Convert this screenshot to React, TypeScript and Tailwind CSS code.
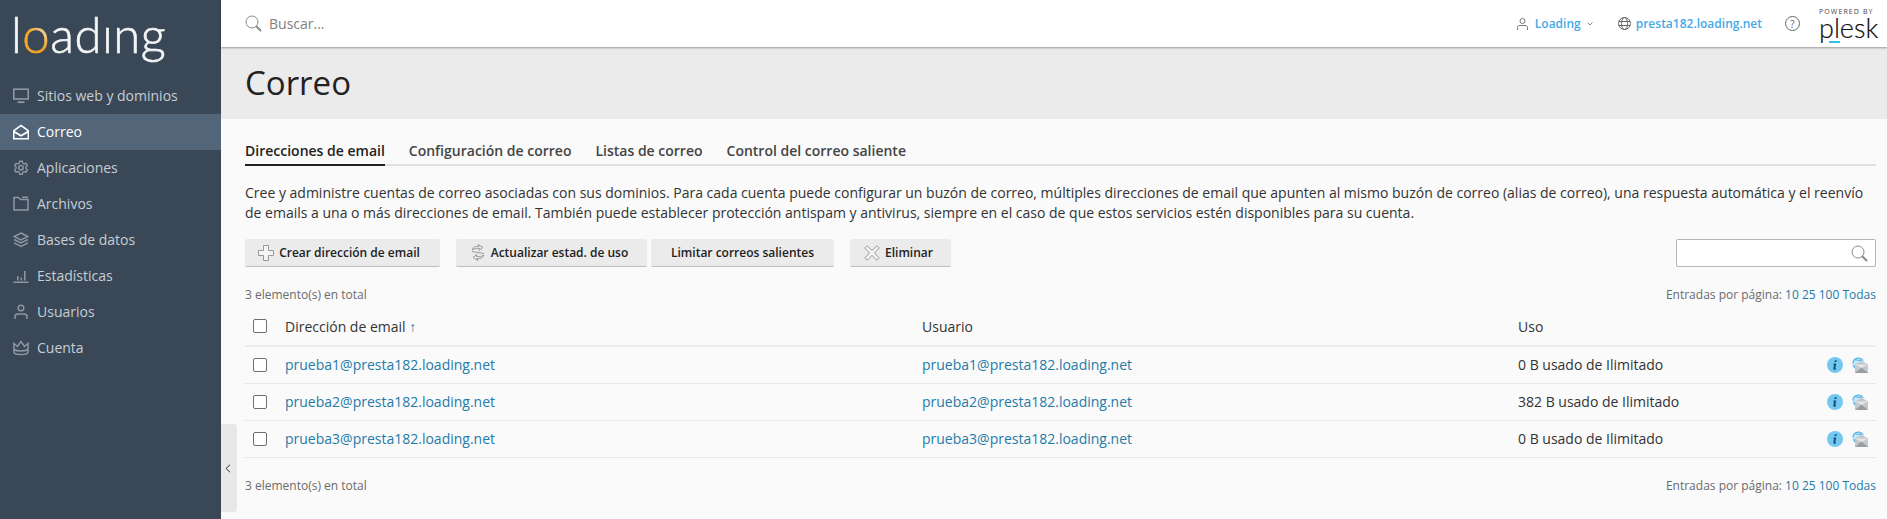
import React from "react";

const S = { fill: "none", stroke: "currentColor", strokeWidth: 1.5 } as const;

const navIcons: Record<string, React.ReactNode> = {
  monitor: (<svg width="16" height="16" viewBox="0 0 16 16" {...S}><rect x="0.8" y="1.2" width="14.4" height="9.8" strokeWidth="1.6" /><path d="M4.500 14.200h7" strokeWidth="1.800" /></svg>),
  mail: (<svg width="16" height="16" viewBox="0 0 16 16"><path d="M0 6.200 8 0.500l8 5.700V15.500H0Z" fill="#fff" /><path d="M1.700 7 8 2.500 14.300 7 8 10.800Z" fill="#536679" /><path d="M1.500 9 8 12.800 14.500 9v5H1.500Z" fill="#536679" /></svg>),
  gear: (<svg width="16" height="16" viewBox="0 0 16 16" {...S}><path d="M6.600.8h2.800l.4 2 1.300.7 1.900-.7 1.400 2.400-1.500 1.300v1.500l1.500 1.300-1.400 2.400-1.900-.7-1.300.7-.4 2H6.600l-.4-2-1.300-.7-1.900.7L1.600 9.300 3.100 8V6.500L1.600 5.200 3 2.800l1.900.7 1.300-.7Z" transform="translate(0 .5)" strokeWidth="1.400" /><circle cx="8" cy="7.800" r="2.200" /></svg>),
  folder: (<svg width="16" height="16" viewBox="0 0 16 16" {...S}><path d="M1 1.500v12.500h14V3.500H7.500L5.500 1.500Z" /><path d="M9 1.300h6" /></svg>),
  layers: (<svg width="16" height="16" viewBox="0 0 16 16" {...S}><path d="M8 1 15 4.500 8 8 1 4.500Z" /><path d="M1 7.500 8 11l7-3.500" /><path d="M1 10.800 8 14.300l7-3.500" /></svg>),
  chart: (<svg width="16" height="16" viewBox="0 0 16 16" fill="currentColor"><rect x="0.500" y="13.500" width="15" height="1.500" /><rect x="4" y="8" width="1.500" height="4.500" /><rect x="7.500" y="9.500" width="1.500" height="3" /><rect x="11" y="3" width="1.500" height="9.500" /></svg>),
  user: (<svg width="16" height="16" viewBox="0 0 16 16" {...S}><circle cx="8" cy="4" r="2.800" /><path d="M2 15v-2.500C2 10.500 3.500 10 5 10h6c1.500 0 3 .5 3 2.500V15" /></svg>),
  crown: (<svg width="16" height="16" viewBox="0 0 16 16" {...S}><path d="M1 3.500 4.500 6.500 8 1.500l3.500 5L15 3.500V12c0 1.500-2 2.500-7 2.500S1 13.500 1 12Z" /><path d="M1 9.500c2 1.300 4.500 1.500 7 1.500s5-.2 7-1.500" /></svg>),
};

const nav = [
  ["monitor", "Sitios web y dominios"],
  ["mail", "Correo"],
  ["gear", "Aplicaciones"],
  ["folder", "Archivos"],
  ["layers", "Bases de datos"],
  ["chart", "Estadísticas"],
  ["user", "Usuarios"],
  ["crown", "Cuenta"],
];

function SearchIcon({ size = 17 }: { size?: number }) {
  return (
    <svg width={size} height={size} viewBox="0 0 17 17" fill="none" stroke="#8a8a8a" strokeWidth="1">
      <circle cx="7" cy="7" r="6" />
      <path d="M11.500 11.500 15.500 15.500" strokeWidth="2" strokeLinecap="round" />
    </svg>
  );
}

function InfoIcon() {
  return (
    <svg width="16" height="16" viewBox="0 0 16 16">
      <circle cx="8" cy="8" r="8" fill="#74c8ef" />
      <path d="M7.800 3.200h2l-.4 1.800h-2ZM6.600 6.500h2.700l-1 4.700c-.1.400.2.500.9.300l-.2.900c-.5.200-1 .3-1.600.3-1 0-1.300-.5-1.100-1.400l.7-3.400h-.6Z" fill="#13507c" />
    </svg>
  );
}

function MailGlobeIcon() {
  return (
    <svg width="16" height="16" viewBox="0 0 16 16">
      <circle cx="6.500" cy="6.500" r="6" fill="#c5e9f8" />
      <path d="M1 6.500a5.500 5.500 0 0 1 10-3M3 2.500c2 1 4 1 6.500 1M1.500 8c1 3 3 4 4 4" fill="none" stroke="#5cb9e6" strokeWidth="1.300" />
      <path d="M3 7.500 9.500 3.800 16 7.500V16H3Z" fill="#c2c8cc" />
      <path d="M3 7.500 9.500 11 16 7.500" fill="#e3e6e8" />
      <path d="M3 16 9.500 10.500 16 16Z" fill="#989da1" />
    </svg>
  );
}

function Checkbox() {
  return <span className="block w-[14px] h-[14px] rounded-[2px] border border-[#6f6f6f] bg-white" />;
}

function ToolButton({ icon, label, className }: { icon?: React.ReactNode; label: string; className: string }) {
  return (
    <button className={`h-[28px] flex items-center justify-center gap-[5px] bg-[#ebebeb] rounded-[2px] border-b border-[#bdbdbd] text-[12px] font-semibold text-[#222] ${className}`}>
      {icon}
      {label}
    </button>
  );
}

const rows = [
  ["prueba1@presta182.loading.net", "0 B usado de Ilimitado"],
  ["prueba2@presta182.loading.net", "382 B usado de Ilimitado"],
  ["prueba3@presta182.loading.net", "0 B usado de Ilimitado"],
];

function PerPage() {
  return (
    <span className="text-[12px] text-[#6b6b6b]">
      Entradas por página: <span className="text-[#1f7ba8]">10 25 100 Todas</span>
    </span>
  );
}

export default function App() {
  return (
    <div className="relative flex h-[519px] w-full overflow-hidden bg-[#fafafa] font-['Open_Sans',sans-serif] text-[14px] text-[#222]">
      <aside className="w-[221px] shrink-0 bg-[#394756] text-[#c7ced5]">
        <div className="h-[78px] pl-[11px] pt-[4px] flex items-start">
          <span className="font-['Lato',sans-serif] font-light [-webkit-text-stroke:0.6px_currentColor] text-[49px] leading-[60px] tracking-[0.5px] text-[#f4f5f6] whitespace-nowrap">
            l<span className="bg-[linear-gradient(45deg,#f5a623_45%,#ffffff_80%)] bg-clip-text text-transparent">o</span>adıng
          </span>
        </div>
        <nav className="flex flex-col">
          {nav.map(([icon, label]) => {
            const active = label === "Correo";
            return (
              <div key={label} className={`h-[36px] flex items-center pl-[13px] gap-[8px] ${active ? "bg-[#536679] text-white" : ""}`}>
                <span className={active ? "text-white" : "text-[#8e98a3]"}>{navIcons[icon]}</span>
                <span className="mb-[2px]">{label}</span>
              </div>
            );
          })}
        </nav>
      </aside>

      <main className="flex-1 min-w-0 flex flex-col">
        <header className="relative h-[47px] shrink-0 bg-white flex items-center pl-[24px] pr-[10px] shadow-[0_1px_2px_rgba(0,0,0,0.35)]">
          <SearchIcon />
          <span className="ml-[7px] text-[#808080]">Buscar...</span>
          <div className="ml-auto flex items-center">
            <svg width="11" height="12" viewBox="0 0 11 12" fill="none" stroke="#777" strokeWidth="1">
              <circle cx="5.500" cy="3" r="2.500" />
              <path d="M.5 12V9.500C.5 8 1.500 7.500 3 7.500h5c1.500 0 2.500.5 2.500 2V12" />
            </svg>
            <span className="ml-[7px] text-[12px] font-semibold text-[#45a9e6]">Loading</span>
            <svg className="ml-[6px]" width="6" height="4" viewBox="0 0 6 4" fill="none" stroke="#888" strokeWidth="1"><path d="M.5.5 3 3 5.500.5" /></svg>
            <svg className="ml-[25px]" width="13" height="13" viewBox="0 0 13 13" fill="none" stroke="#666" strokeWidth="1">
              <circle cx="6.500" cy="6.500" r="6" />
              <ellipse cx="6.500" cy="6.500" rx="3" ry="6" />
              <path d="M1 4.500h11M1 8.500h11" />
            </svg>
            <span className="ml-[5px] text-[12px] font-semibold text-[#45a9e6]">presta182.loading.net</span>
            <span className="ml-[23px] w-[15px] h-[15px] rounded-full border border-[#666] flex items-center justify-center text-[10px] leading-none text-[#666]">?</span>
            <div className="ml-[19px] w-[58px] flex flex-col items-start">
              <span className="text-[7px] leading-[8px] tracking-[1.100px] text-[#444] whitespace-nowrap">POWERED BY</span>
              <span className="relative font-['Lato',sans-serif] font-light text-[27px] leading-[23px] text-[#111] [-webkit-text-stroke:0.2px_currentColor]">
                plesk
                <span className="absolute left-[10px] top-[25px] w-[11px] h-[2px] bg-[#28c3e6]" />
              </span>
            </div>
          </div>
        </header>

        <div className="h-[72px] shrink-0 bg-[#ebebeb] pl-[24px] flex items-center">
          <h1 className="text-[33px] font-normal text-[#222]">Correo</h1>
        </div>

        <div className="pl-[24px] pr-[11px]">
          <div className="mt-[20px] h-[27px] pt-[1px] flex gap-[24px] border-b-2 border-[#e0e0e0] font-semibold text-[#444]">
            <div className="h-[26px] border-b-2 border-[#222] text-[#222]">Direcciones de email</div>
            <div>Configuración de correo</div>
            <div>Listas de correo</div>
            <div>Control del correo saliente</div>
          </div>

          <p className="mt-[17px] text-[14px] leading-[20px] text-[#333]">
            Cree y administre cuentas de correo asociadas con sus dominios. Para cada cuenta puede configurar un buzón de correo, múltiples direcciones de email que apunten al mismo buzón de correo (alias de correo), una respuesta automática y el reenvío de emails a una o más direcciones de email. También puede establecer protección antispam y antivirus, siempre en el caso de que estos servicios estén disponibles para su cuenta.
          </p>

          <div className="mt-[16px] flex items-center">
            <ToolButton className="w-[195px] pr-[7px]" label="Crear dirección de email" icon={
              <svg width="16" height="16" viewBox="0 0 16 16" fill="#f4f4f4" stroke="#999" strokeWidth="1"><path d="M5.500.5h5v5h5v5h-5v5h-5v-5h-5v-5h5Z" /></svg>
            } />
            <ToolButton className="w-[191px] ml-[16px] pr-[5px]" label="Actualizar estad. de uso" icon={
              <svg width="16" height="17" viewBox="0 0 16 17" fill="none" stroke="#999" strokeWidth="1"><path d="M2 6c1-3 4-4 7-3.500L8 .5l5 3-4 3 .5-2c-3-.5-5 0-7.500 1.500ZM14 11c-1 3-4 4-7 3.500l1 2-5-3 4-3-.5 2c3 .5 5 0 7.500-1.500Z" /><path d="M2 7.500 14 9.500" /></svg>
            } />
            <ToolButton className="w-[183px] ml-[4px]" label="Limitar correos salientes" />
            <ToolButton className="w-[101px] ml-[16px] pr-[4px]" label="Eliminar" icon={
              <svg width="16" height="16" viewBox="0 0 16 16" fill="#f4f4f4" stroke="#999" strokeWidth="1"><path d="M3 .8 8 5.500 13 .8l2.200 2.200-4.700 5 4.700 5-2.200 2.200-5-4.700-5 4.700L.8 13l4.700-5L.8 3Z" /></svg>
            } />
            <div className="ml-auto w-[200px] h-[28px] rounded-[2px] border border-[#b5b5b5] bg-white flex items-center justify-end pr-[7px]">
              <SearchIcon />
            </div>
          </div>

          <div className="mt-[20px] h-[16px] flex items-center justify-between">
            <span className="text-[12px] text-[#6b6b6b]">3 elemento(s) en total</span>
            <PerPage />
          </div>

          <div className="mt-[5px]">
            <div className="h-[39px] flex items-center border-b-2 border-[#ececec] text-[#333] pb-[1px]">
              <div className="w-[40px] pl-[8px]"><Checkbox /></div>
              <div className="w-[637px]">Dirección de email <span className="text-[#1f7ba8]">↑</span></div>
              <div className="w-[596px]">Usuario</div>
              <div>Uso</div>
            </div>
            {rows.map(([mail, usage]) => (
              <div key={mail} className="h-[37px] flex items-center border-b border-[#e6e6e6]">
                <div className="w-[40px] pl-[8px]"><Checkbox /></div>
                <div className="w-[637px] mb-[2px] text-[#1f7ba8]">{mail}</div>
                <div className="w-[596px] mb-[2px] text-[#1f7ba8]">{mail}</div>
                <div className="mb-[2px] text-[#333]">{usage}</div>
                <div className="ml-auto mr-[8px] flex gap-[9px]"><InfoIcon /><MailGlobeIcon /></div>
              </div>
            ))}
          </div>

          <div className="mt-[20px] h-[16px] flex items-center justify-between">
            <span className="text-[12px] text-[#6b6b6b]">3 elemento(s) en total</span>
            <PerPage />
          </div>
        </div>
      </main>

      <button className="absolute left-[221px] top-[424px] w-[16px] h-[88px] bg-[#e8e8e8] rounded-r-[3px] flex items-center justify-center pr-[2px]">
        <svg width="6" height="9" viewBox="0 0 6 9" fill="none" stroke="#333" strokeWidth="1"><path d="M5 .8 1 4.500 5 8.200" /></svg>
      </button>
    </div>
  );
}
